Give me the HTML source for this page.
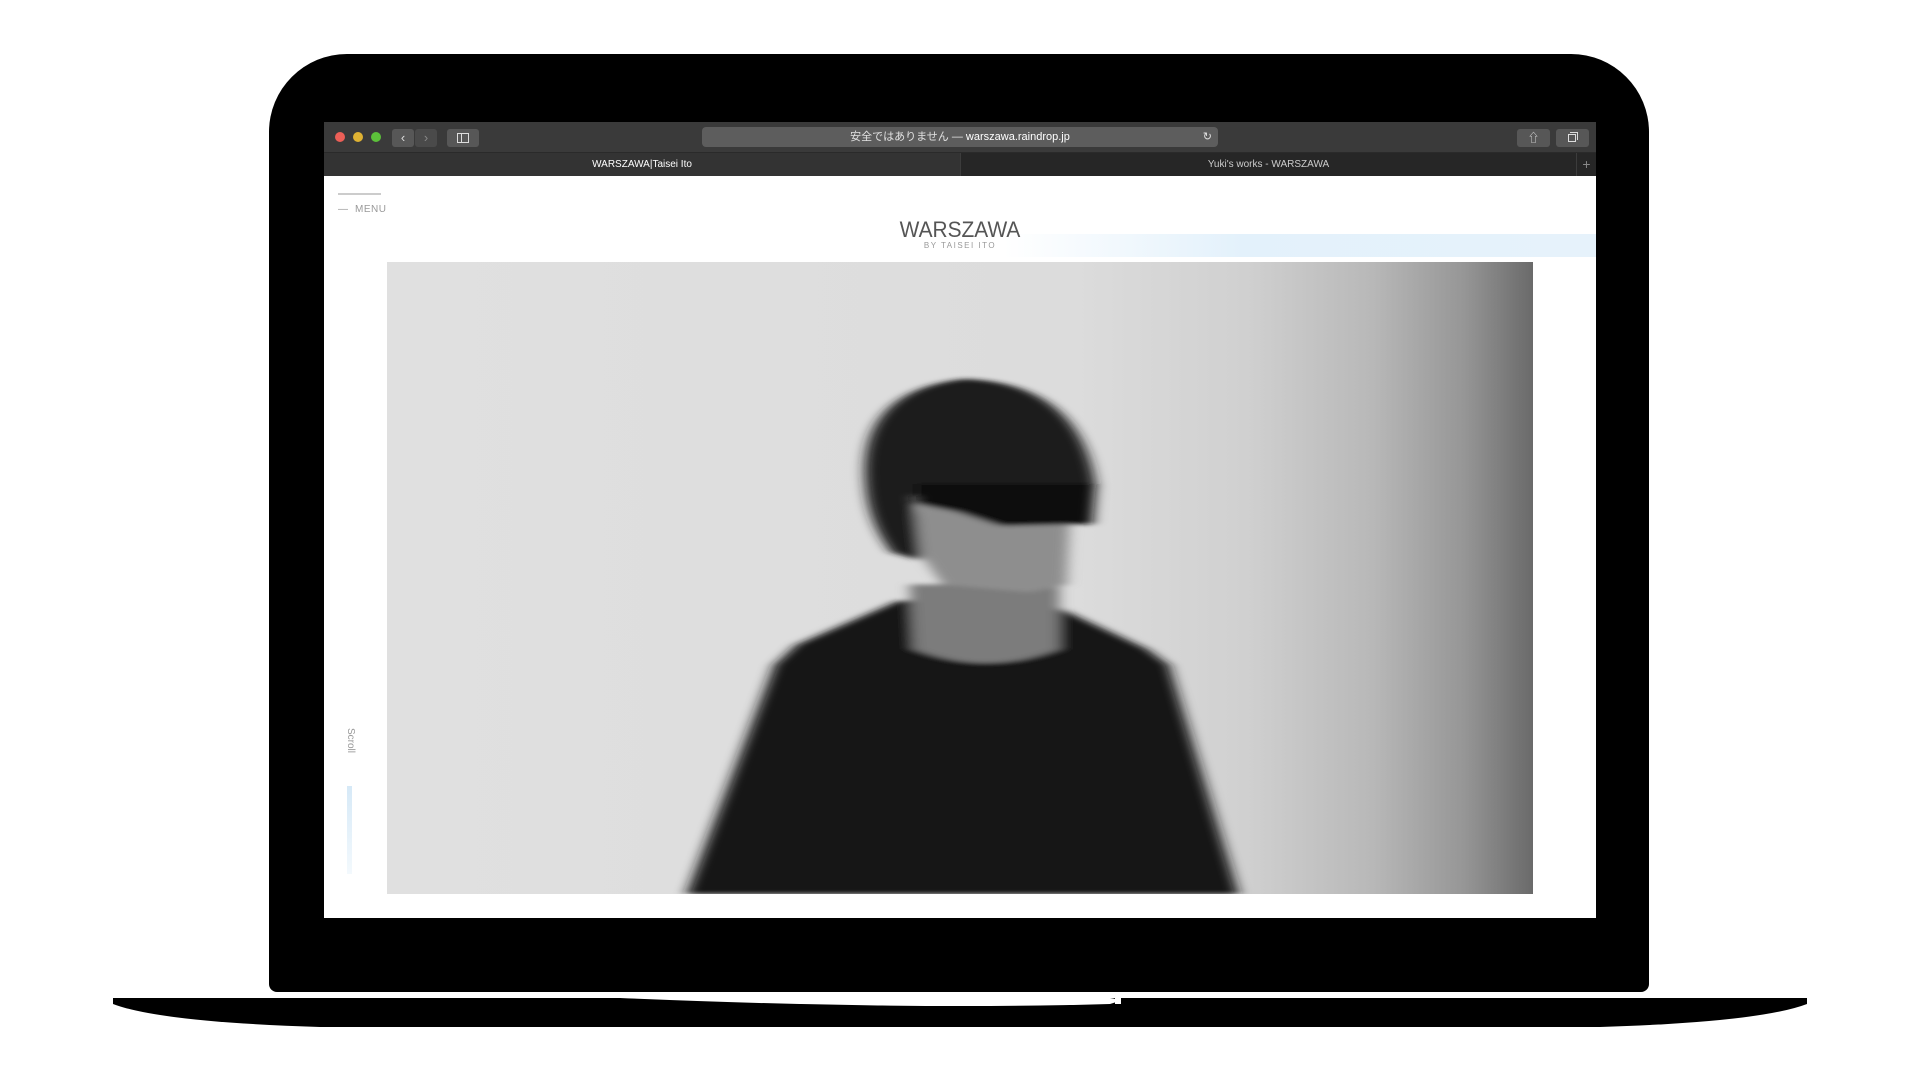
<!DOCTYPE html>
<html><head><meta charset="utf-8"><style>
*{margin:0;padding:0;box-sizing:border-box}
body{width:1920px;height:1080px;background:#fff;position:relative;overflow:hidden;font-family:"Liberation Sans","Noto Sans CJK JP",sans-serif}
.abs{position:absolute}
.lid{left:269px;top:54px;width:1380px;height:938px;background:#000;border-radius:78px 78px 8px 8px}
.screen{left:324px;top:122px;width:1272px;height:796px;background:#fff;overflow:hidden}
.tb{left:0;top:0;width:1272px;height:31px;background:#3a3a3a;border-bottom:1px solid #2a2a2a}
.tabs{left:0;top:31px;width:1272px;height:23px;background:#262626}
.dot{width:10px;height:10px;border-radius:50%;top:10px}
.btn{background:#575757;border-radius:3px;height:18px;top:7px}
.url{left:378px;top:5px;width:516px;height:20px;background:#5d5d5d;border-radius:4px;color:#e2e2e2;font-size:11px;text-align:center;line-height:20px}
.tab{top:0;height:23px;font-size:10px;color:#e6e6e6;text-align:center;line-height:23px}
</style></head><body>
<div class="abs lid"></div>
<svg class="abs" style="left:0;top:0" width="1920" height="1080">
<path d="M113 998 L1807 998 L1807 1004 Q1760 1022 1600 1027 L320 1027 Q160 1022 113 1004 Z" fill="#000"/>
<path d="M620 998 Q900 995 1110 998 Q1125 1000 1110 1004 Q900 1010 620 998 Z" fill="#fff"/>
<rect x="1115" y="992" width="6" height="12" fill="#fff"/>
</svg>
<div class="abs screen">
 <div class="abs tb">
  <div class="abs dot" style="left:11px;background:#ec5f57"></div>
  <div class="abs dot" style="left:29px;background:#dfb233"></div>
  <div class="abs dot" style="left:47px;background:#5cc13a"></div>
  <div class="abs btn" style="left:68px;width:22px;color:#ddd;font-size:13px;text-align:center;line-height:18px">&#8249;</div>
  <div class="abs btn" style="left:91px;width:22px;background:#4a4a4a;color:#888;font-size:13px;text-align:center;line-height:18px">&#8250;</div>
  <div class="abs btn" style="left:123px;width:32px"><div class="abs" style="left:10px;top:4px;width:12px;height:10px;border:1px solid #ddd"></div><div class="abs" style="left:14px;top:4px;width:1px;height:10px;background:#ddd"></div></div>
  <div class="abs url">安全ではありません — <span style="color:#fff">warszawa.raindrop.jp</span><span class="abs" style="right:6px;top:0;font-size:11px">&#8635;</span></div>
  <div class="abs btn" style="left:1193px;width:33px;color:#ddd;font-size:12px;text-align:center;line-height:18px">&#8679;</div>
  <div class="abs btn" style="left:1232px;width:33px"><div class="abs" style="left:12px;top:5px;width:8px;height:8px;border:1px solid #ddd"></div><div class="abs" style="left:14px;top:3px;width:8px;height:8px;border-top:1px solid #ddd;border-right:1px solid #ddd"></div></div>
 </div>
 <div class="abs tabs">
  <div class="abs tab" style="left:0;width:636px;background:#333;color:#fff">WARSZAWA|Taisei Ito</div>
  <div class="abs tab" style="left:636px;width:616px;border-left:1px solid #3c3c3c;color:#ccc">Yuki's works - WARSZAWA</div>
  <div class="abs tab" style="left:1252px;width:20px;border-left:1px solid #3c3c3c;color:#888;font-size:14px">+</div>
 </div>
 <div class="abs" style="left:680px;top:112px;width:592px;height:23px;background:linear-gradient(90deg,rgba(220,238,250,0),#e3f1fb 40%,#e6f2fb)"></div>
 <div class="abs" style="left:14px;top:71px;width:43px;height:2px;background:#ccc"></div>
 <div class="abs" style="left:14px;top:82px;font-size:10px;color:#999;letter-spacing:0.5px">— &nbsp;MENU</div>
 <div class="abs" style="left:0;width:1272px;top:95px;text-align:center;font-size:22px;color:#555;letter-spacing:0px;transform:scaleX(0.95)">WARSZAWA</div>
 <div class="abs" style="left:0;width:1272px;top:119px;text-align:center;font-size:8px;color:#999;letter-spacing:1.5px">BY TAISEI ITO</div>
 <div class="abs" style="top:606px;left:32px;font-size:10px;color:#999;transform:rotate(90deg);transform-origin:left top">Scroll</div>
 <div class="abs" style="left:23px;top:664px;width:5px;height:88px;background:linear-gradient(#d6e9f7,#f3f9fd)"></div>
 <svg class="abs" style="left:63px;top:140px" width="1146" height="632" viewBox="0 0 1568 1568" preserveAspectRatio="none">
  <defs>
   <linearGradient id="bg" x1="0" x2="1" y1="0" y2="0">
    <stop offset="0" stop-color="#e0e0e0"/><stop offset="0.6" stop-color="#dcdcdc"/><stop offset="0.75" stop-color="#d0d0d0"/><stop offset="0.86" stop-color="#b8b8b8"/><stop offset="0.94" stop-color="#969696"/><stop offset="1" stop-color="#6a6a6a"/>
   </linearGradient>
   <filter id="b" x="-20%" y="-20%" width="140%" height="140%"><feGaussianBlur stdDeviation="9 5"/></filter>
  </defs>
  <rect width="1568" height="1568" fill="url(#bg)"/>
  <g filter="url(#b)">
   <path d="M700 840 L560 950 L530 1000 L410 1568 L1165 1568 L1070 1000 L1040 960 L910 850 Z" fill="#161616"/>
   <path d="M715 800 L920 800 L920 960 Q820 1030 720 960 Z" fill="#7c7c7c"/>
   <path d="M725 600 L935 600 L930 800 L880 820 L760 800 L720 700 Z" fill="#8e8e8e"/>
   <path d="M655 560 Q640 320 790 290 Q950 300 970 560 L960 570 L720 580 L730 740 L690 720 Q660 650 655 560 Z" fill="#1e1e1e"/>
   <path d="M725 550 L970 550 L965 650 L840 655 L780 620 L725 600 Z" fill="#111"/>
  </g>
 </svg>
</div>
</body></html>
